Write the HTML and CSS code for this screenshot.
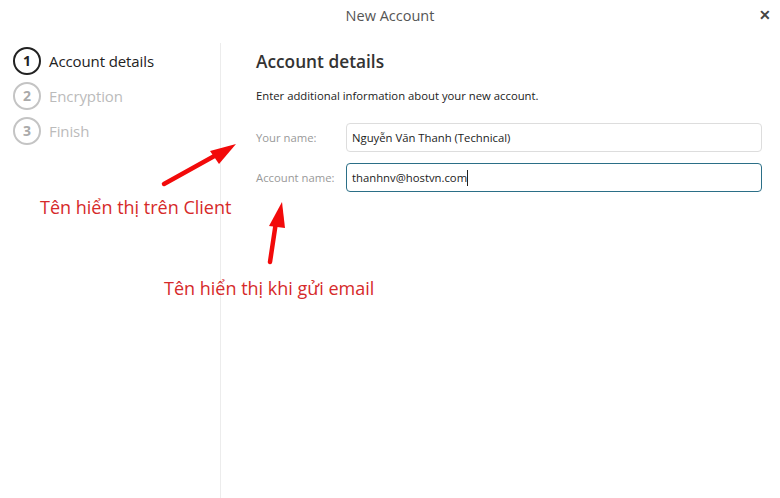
FILE: index.html
```html
<!DOCTYPE html>
<html>
<head>
  <meta http-equiv="content-type" content="text/html; charset=UTF-8">
  <link rel="stylesheet" href="styles.css">
  <title>New Account</title>
</head>
<body>
<div class="window">
  <div class="titlebar">
    <span class="title">New Account</span>
    <span class="close">&#x2715;</span>
  </div>

  <div class="main">
    <div class="steps">
      <div class="step active"><span class="num">1</span><span class="label">Account details</span></div>
      <div class="step"><span class="num">2</span><span class="label">Encryption</span></div>
      <div class="step"><span class="num">3</span><span class="label">Finish</span></div>
    </div>

    <div class="content">
      <h1>Account details</h1>
      <p class="intro">Enter additional information about your new account.</p>
      <div class="row">
        <label>Your name:</label>
        <div class="field">Nguyễn Văn Thanh (Technical)</div>
      </div>
      <div class="row">
        <label>Account name:</label>
        <div class="field focus">thanhnv@hostvn.com<span class="caret"></span></div>
      </div>
    </div>
  </div>

  <!-- annotations drawn over the screenshot -->
  <svg class="arrows" width="780" height="498" viewBox="0 0 780 498">
    <line x1="164" y1="184" x2="218" y2="154" stroke="#f20a0a" stroke-width="4.5" stroke-linecap="round"/>
    <polygon points="236,144 210,151 219,164" fill="#f20a0a"/>
    <line x1="270" y1="262" x2="276" y2="222" stroke="#f20a0a" stroke-width="4.5" stroke-linecap="round"/>
    <polygon points="282,202 269,226 285,228" fill="#f20a0a"/>
  </svg>
  <div class="note note1">Tên hiển thị trên Client</div>
  <div class="note note2">Tên hiển thị khi gửi email</div>
</div>
</body>
</html>
```

FILE: styles.css
```css
body {
  margin: 0;
  background-color: #fff;
  font-family: "Open Sans", "Noto Sans", sans-serif;
  color: #222;
}

.window {
  position: relative;
  width: 780px;
  height: 498px;
  overflow: hidden;
}

.titlebar {
  height: 43px;
  display: flex;
  justify-content: center;
  position: relative;
}
.title {
  margin-top: 6px;
  font-size: 14.5px;
  color: #555;
}
.close {
  position: absolute;
  right: 9px;
  top: 5px;
  font-size: 14px;
  font-weight: bold;
  color: #444;
}

.main {
  display: flex;
  height: 455px;
}

.steps {
  width: 221px;
  border-right: 1px solid #ececec;
  padding-left: 13px;
  box-sizing: border-box;
}
.step {
  display: flex;
  align-items: center;
  height: 35px;
  color: #bbb;
}
.step .num {
  width: 24px;
  height: 24px;
  border: 2px solid #c4c4c4;
  border-radius: 50%;
  display: flex;
  align-items: center;
  justify-content: center;
  font-size: 14px;
  font-weight: bold;
  color: #aaa;
  margin-right: 8px;
}
.step .label {
  font-size: 15px;
  letter-spacing: -0.1px;
}
.step.active { color: #222; }
.step.active .num {
  border-color: #222;
  color: #222;
}

.content {
  flex: 1;
  padding-left: 35px;
  padding-right: 18px;
}
.content h1 {
  margin: 7px 0 0;
  font-size: 17.3px;
  font-weight: 600;
  color: #333;
  height: 28px;
}
.intro {
  margin: 10px 0 20px;
  font-size: 11.3px;
  color: #222;
}
.row {
  display: flex;
  align-items: center;
  height: 29px;
  margin-bottom: 11px;
}
.row label {
  width: 90px;
  font-size: 11.3px;
  color: #999;
}
.field {
  flex: 1;
  height: 27px;
  border: 1px solid #ddd;
  border-radius: 4px;
  display: flex;
  align-items: center;
  padding-left: 5px;
  font-size: 11.3px;
  color: #222;
}
.field.focus {
  border-color: #2b6f87;
}
.caret {
  width: 1px;
  height: 16px;
  background: #222;
}

.arrows {
  position: absolute;
  left: 0;
  top: 0;
}
.note {
  position: absolute;
  font-size: 18px;
  color: #d62a2a;
  white-space: nowrap;
}
.note1 { left: 40px; top: 195px; }
.note2 { left: 164px; top: 276px; }
```
